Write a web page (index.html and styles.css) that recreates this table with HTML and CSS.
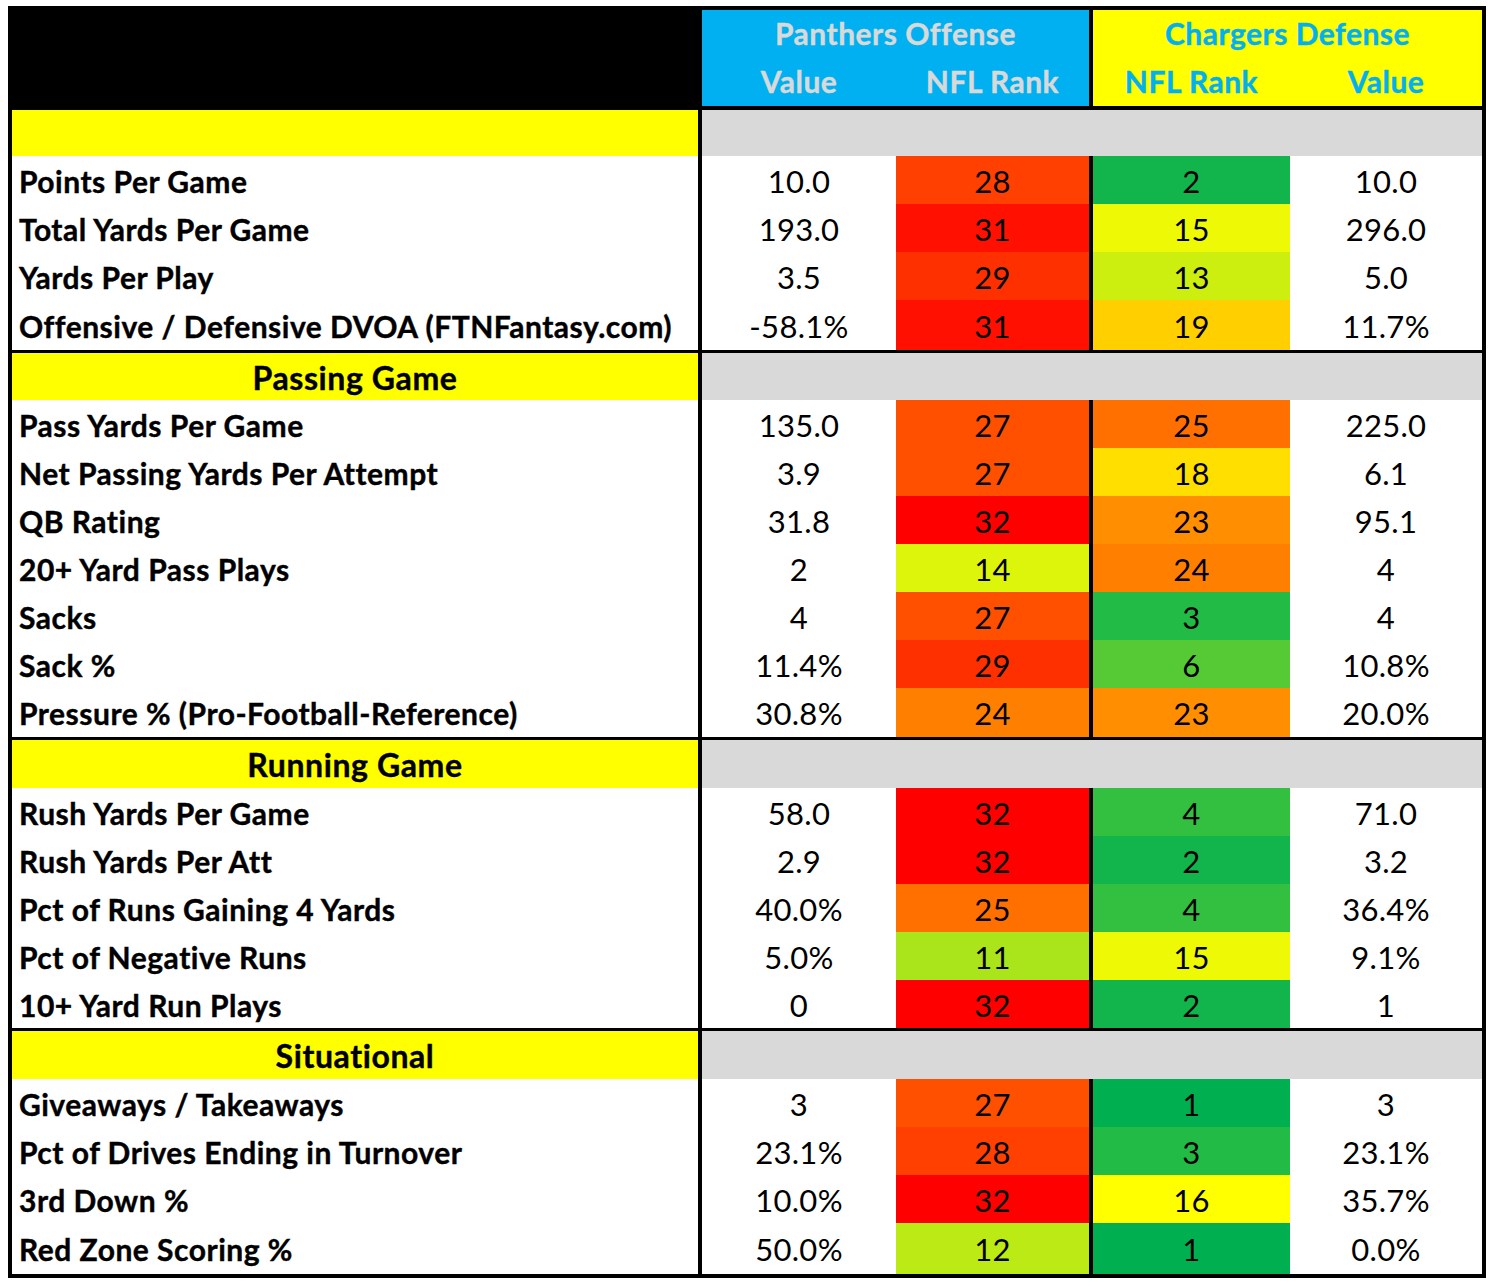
FILE: index.html
```html
<!DOCTYPE html>
<html>
<head>
<meta charset="utf-8">
<title>Panthers Offense vs Chargers Defense</title>
<link rel="stylesheet" href="styles.css">
</head>
<body>
<div class="sheet">
  <div class="head">
    <div class="head-blank"></div>
    <div class="team off">
      <div class="team-name">Panthers Offense</div>
      <div class="team-cols"><span>Value</span><span>NFL Rank</span></div>
    </div>
    <div class="team def">
      <div class="team-name">Chargers Defense</div>
      <div class="team-cols"><span>NFL Rank</span><span>Value</span></div>
    </div>
  </div>

  <div class="row sec first"><div class="lab"></div><div class="gray"></div></div>
  <div class="row"><div class="lab">Points Per Game</div><div class="v">10.0</div><div class="rk k28">28</div><div class="rk k2">2</div><div class="v">10.0</div></div>
  <div class="row"><div class="lab">Total Yards Per Game</div><div class="v">193.0</div><div class="rk k31">31</div><div class="rk k15">15</div><div class="v">296.0</div></div>
  <div class="row"><div class="lab">Yards Per Play</div><div class="v">3.5</div><div class="rk k29">29</div><div class="rk k13">13</div><div class="v">5.0</div></div>
  <div class="row h50"><div class="lab">Offensive / Defensive DVOA (FTNFantasy.com)</div><div class="v">-58.1%</div><div class="rk k31">31</div><div class="rk k19">19</div><div class="v">11.7%</div></div>

  <div class="row sec h47"><div class="lab">Passing Game</div><div class="gray"></div></div>
  <div class="row"><div class="lab">Pass Yards Per Game</div><div class="v">135.0</div><div class="rk k27">27</div><div class="rk k25">25</div><div class="v">225.0</div></div>
  <div class="row"><div class="lab">Net Passing Yards Per Attempt</div><div class="v">3.9</div><div class="rk k27">27</div><div class="rk k18">18</div><div class="v">6.1</div></div>
  <div class="row"><div class="lab">QB Rating</div><div class="v">31.8</div><div class="rk k32">32</div><div class="rk k23">23</div><div class="v">95.1</div></div>
  <div class="row"><div class="lab">20+ Yard Pass Plays</div><div class="v">2</div><div class="rk k14">14</div><div class="rk k24">24</div><div class="v">4</div></div>
  <div class="row"><div class="lab">Sacks</div><div class="v">4</div><div class="rk k27">27</div><div class="rk k3">3</div><div class="v">4</div></div>
  <div class="row"><div class="lab">Sack %</div><div class="v">11.4%</div><div class="rk k29">29</div><div class="rk k6">6</div><div class="v">10.8%</div></div>
  <div class="row h49"><div class="lab">Pressure % (Pro-Football-Reference)</div><div class="v">30.8%</div><div class="rk k24">24</div><div class="rk k23">23</div><div class="v">20.0%</div></div>

  <div class="row sec"><div class="lab">Running Game</div><div class="gray"></div></div>
  <div class="row"><div class="lab">Rush Yards Per Game</div><div class="v">58.0</div><div class="rk k32">32</div><div class="rk k4">4</div><div class="v">71.0</div></div>
  <div class="row"><div class="lab">Rush Yards Per Att</div><div class="v">2.9</div><div class="rk k32">32</div><div class="rk k2">2</div><div class="v">3.2</div></div>
  <div class="row"><div class="lab">Pct of Runs Gaining 4 Yards</div><div class="v">40.0%</div><div class="rk k25">25</div><div class="rk k4">4</div><div class="v">36.4%</div></div>
  <div class="row"><div class="lab">Pct of Negative Runs</div><div class="v">5.0%</div><div class="rk k11">11</div><div class="rk k15">15</div><div class="v">9.1%</div></div>
  <div class="row"><div class="lab">10+ Yard Run Plays</div><div class="v">0</div><div class="rk k32">32</div><div class="rk k2">2</div><div class="v">1</div></div>

  <div class="row sec"><div class="lab">Situational</div><div class="gray"></div></div>
  <div class="row"><div class="lab">Giveaways / Takeaways</div><div class="v">3</div><div class="rk k27">27</div><div class="rk k1">1</div><div class="v">3</div></div>
  <div class="row"><div class="lab">Pct of Drives Ending in Turnover</div><div class="v">23.1%</div><div class="rk k28">28</div><div class="rk k3">3</div><div class="v">23.1%</div></div>
  <div class="row"><div class="lab">3rd Down %</div><div class="v">10.0%</div><div class="rk k32">32</div><div class="rk k16">16</div><div class="v">35.7%</div></div>
  <div class="row h51"><div class="lab">Red Zone Scoring %</div><div class="v">50.0%</div><div class="rk k12">12</div><div class="rk k1">1</div><div class="v">0.0%</div></div>
</div>
</body>
</html>
```

FILE: styles.css
```css
html, body {
  background: #ffffff;
}
body {
  margin: 6px 0 0 8px;
  font-family: Lato, "Liberation Sans", sans-serif;
  color: #000000;
}
.sheet {
  width: 1478px;
  box-sizing: border-box;
  border: 4px solid #000000;
  display: flex;
  flex-direction: column;
}

/* header */
.head {
  display: grid;
  grid-template-columns: 690px 391px 389px;
  height: 100px;
  box-sizing: border-box;
  border-bottom: 4px solid #000000;
  background: #000000;
}
.head-blank {
  background: #000000;
}
.team {
  display: flex;
  flex-direction: column;
  font-weight: 700;
  font-size: 30px;
  letter-spacing: 0.5px;
  -webkit-text-stroke: 0.4px currentColor;
}
.team.off {
  background: #00b0f0;
  color: #d9d9d9;
  border-right: 4px solid #000000;
}
.team.def {
  background: #ffff00;
  color: #00b0f0;
}
.team-name {
  height: 47px;
  display: flex;
  align-items: center;
  justify-content: center;
  padding-bottom: 1px;
  box-sizing: border-box;
}
.team-cols {
  height: 49px;
  display: grid;
  align-items: center;
  padding-bottom: 1px;
  box-sizing: border-box;
}
.team.off .team-cols {
  grid-template-columns: 194px 193px;
}
.team.def .team-cols {
  grid-template-columns: 197px 192px;
}
.team-cols span {
  text-align: center;
}

/* body rows */
.row {
  display: grid;
  grid-template-columns: 690px 194px 197px 197px 192px;
  height: 48px;
  box-sizing: border-box;
}
.row.h49 { height: 49px; }
.row.h50 { height: 50px; }
.row.h51 { height: 51px; }
.row > div {
  display: flex;
  align-items: center;
  padding-top: 1px;
  box-sizing: border-box;
}
.lab {
  font-weight: 700;
  font-size: 30px;
  letter-spacing: 0.5px;
  -webkit-text-stroke: 0.4px #000000;
  padding-left: 7px;
  border-right: 4px solid #000000;
  white-space: nowrap;
}
.v, .rk {
  justify-content: center;
  font-size: 31px;
  letter-spacing: 0.3px;
}
.row > .rk:nth-child(3) {
  border-right: 4px solid #000000;
}

/* section rows */
.row.sec {
  grid-template-columns: 690px 780px;
  height: 51px;
  border-top: 3px solid #000000;
}
.row.sec.h47 { height: 50px; }
.row.sec.first {
  height: 46px;
  border-top: none;
}
.row.sec .lab {
  background: #ffff00;
  justify-content: center;
  padding-left: 0;
  font-size: 32px;
  letter-spacing: 0.6px;
}
.row.sec .gray {
  background: #d9d9d9;
}

/* rank colour scale: 1 green -> 16 yellow -> 32 red */
.k1  { background: #00b050; }
.k2  { background: #11b54b; }
.k3  { background: #22bb45; }
.k4  { background: #33c040; }
.k6  { background: #55ca35; }
.k11 { background: #aae51b; }
.k12 { background: #bbea15; }
.k13 { background: #ccef10; }
.k14 { background: #ddf50b; }
.k15 { background: #eefa05; }
.k16 { background: #ffff00; }
.k18 { background: #ffdf00; }
.k19 { background: #ffcf00; }
.k23 { background: #ff8f00; }
.k24 { background: #ff8000; }
.k25 { background: #ff7000; }
.k27 { background: #ff5000; }
.k28 { background: #ff4000; }
.k29 { background: #ff3000; }
.k31 { background: #ff1000; }
.k32 { background: #ff0000; }
```
